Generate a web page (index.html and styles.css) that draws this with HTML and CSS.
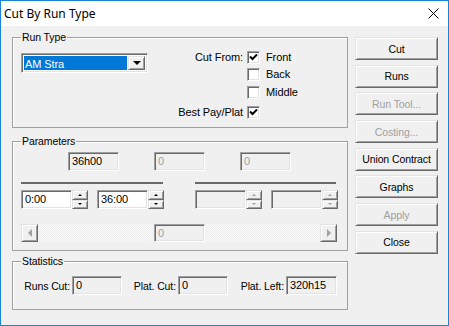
FILE: index.html
```html
<!DOCTYPE html>
<html lang="en">

<head>
	<meta charset="utf-8" />
	<title>Cut By Run Type</title>
	<link rel="stylesheet" href="styles.css">
</head>

<body>
	<div class="window">
		<div class="titlebar">
			<span class="title">Cut By Run Type</span>
			<svg class="close" width="11" height="11" viewBox="0 0 11 11"><path d="M0.5 0.5L10.5 10.5M10.5 0.5L0.5 10.5" stroke="#000" stroke-width="1" fill="none"/></svg>
		</div>
		<div class="client">
			<div class="main">
				<div class="group group-runtype">
					<span class="group-title">Run Type</span>
					<div class="combo">
						<span class="combo-value"><span class="combo-sel">AM Stra</span></span>
						<span class="combo-btn"><span class="tri tri-down"></span></span>
					</div>
					<div class="cut-from">
						<span class="cf-label">Cut From:</span>
						<span class="check checked"><svg width="9" height="9" viewBox="0 0 9 9"><path d="M1 3.5L3.5 6L8 1.5" stroke="#000" stroke-width="2" fill="none"/></svg></span>
						<span class="check-text">Front</span>

						<span class="cf-label"></span>
						<span class="check"></span>
						<span class="check-text">Back</span>

						<span class="cf-label"></span>
						<span class="check"></span>
						<span class="check-text">Middle</span>

						<span class="cf-label">Best Pay/Plat</span>
						<span class="check checked"><svg width="9" height="9" viewBox="0 0 9 9"><path d="M1 3.5L3.5 6L8 1.5" stroke="#000" stroke-width="2" fill="none"/></svg></span>
						<span class="check-text"></span>
					</div>
				</div>

				<div class="group group-params">
					<span class="group-title">Parameters</span>
					<div class="param-fields">
						<span class="field readonly">36h00</span>
						<span class="field disabled">0</span>
						<span class="field disabled">0</span>
					</div>
					<div class="spin-cols">
						<div class="spin-col">
							<div class="sep"></div>
							<div class="spin-row">
								<div class="spin-edit">
									<span class="field edit">0:00</span>
									<span class="spin"><span class="spin-up"><span class="tri tri-up"></span></span><span class="spin-down"><span class="tri tri-down-s"></span></span></span>
								</div>
								<div class="spin-edit">
									<span class="field edit">36:00</span>
									<span class="spin"><span class="spin-up"><span class="tri tri-up"></span></span><span class="spin-down"><span class="tri tri-down-s"></span></span></span>
								</div>
							</div>
						</div>
						<div class="spin-col spin-col-right">
							<div class="sep sep-right"></div>
							<div class="spin-row">
								<div class="spin-edit off">
									<span class="field disabled"></span>
									<span class="spin"><span class="spin-up"><span class="tri tri-up"></span></span><span class="spin-down"><span class="tri tri-down-s"></span></span></span>
								</div>
								<div class="spin-edit off">
									<span class="field disabled"></span>
									<span class="spin"><span class="spin-up"><span class="tri tri-up"></span></span><span class="spin-down"><span class="tri tri-down-s"></span></span></span>
								</div>
							</div>
						</div>
					</div>
					<div class="scrollbar">
						<span class="sb-btn"><span class="tri tri-left"></span></span>
						<span class="sb-track"></span>
						<span class="sb-btn"><span class="tri tri-right"></span></span>
						<span class="field disabled sb-field">0</span>
					</div>
				</div>

				<div class="group group-stats">
					<span class="group-title">Statistics</span>
					<div class="stats">
						<span class="stat-label">Runs Cut:</span>
						<span class="field readonly">0</span>
						<span class="stat-label">Plat. Cut:</span>
						<span class="field readonly">0</span>
						<span class="stat-label">Plat. Left:</span>
						<span class="field readonly">320h15</span>
					</div>
				</div>
			</div>

			<div class="buttons">
				<button type="button">Cut</button>
				<button type="button">Runs</button>
				<button type="button" disabled>Run Tool...</button>
				<button type="button" disabled>Costing...</button>
				<button type="button">Union Contract</button>
				<button type="button">Graphs</button>
				<button type="button" disabled>Apply</button>
				<button type="button">Close</button>
			</div>
		</div>
	</div>
</body>

</html>
```

FILE: styles.css
```css
body {
	margin: 0;
	background-color: #f0f0f0;
	font-family: "Liberation Sans", Arial, sans-serif;
	font-size: 10.5px;
	letter-spacing: -0.1px;
	color: #000000;
}
.window {
	width: 449px;
	height: 326px;
	box-sizing: border-box;
	border: solid 1px #1883d7;
	background-color: #f0f0f0;
}
.titlebar {
	height: 25px;
	background-color: #ffffff;
	display: flex;
	align-items: center;
	justify-content: space-between;
	padding: 0 9px 0 3px;
}
.title {
	font-family: "Noto Sans", "Liberation Sans", sans-serif;
	font-size: 12px;
	letter-spacing: 0;
	line-height: 14px;
}
.close {
	display: block;
}
.client {
	display: flex;
	gap: 7px;
	padding: 11px 0 0 11px;
}
.main {
	width: 336px;
}

/* group boxes */
.group {
	position: relative;
	box-sizing: border-box;
	border: solid 1px #a0a0a0;
	box-shadow: inset 1px 1px #ffffff;
}
.group-title {
	position: absolute;
	top: -7px;
	left: 8px;
	padding: 0 1px;
	line-height: 13px;
	background-color: #f0f0f0;
}
.group-runtype {
	height: 91px;
	display: flex;
	align-items: flex-start;
	padding: 13px 0 0 8px;
}
.group-params {
	height: 110px;
	margin-top: 13px;
	padding: 10px 0 0 8px;
}
.group-stats {
	height: 49px;
	margin-top: 10px;
	padding-top: 14px;
}

/* 3d borders */
.field,
.check,
.combo {
	box-sizing: border-box;
	border: solid 1px;
	border-color: #a0a0a0 #ffffff #ffffff #a0a0a0;
	box-shadow: inset 1px 1px #696969, inset -1px -1px #e3e3e3;
}
.combo-btn,
.spin-up,
.spin-down,
.sb-btn,
button {
	box-sizing: border-box;
	border: solid 1px;
	border-color: #e3e3e3 #696969 #696969 #e3e3e3;
	box-shadow: inset 1px 1px #ffffff, inset -1px -1px #a0a0a0;
	background-color: #f0f0f0;
}

/* combo */
.combo {
	width: 127px;
	height: 20px;
	margin-top: 2px;
	display: flex;
	padding: 2px;
	background-color: #ffffff;
}
.combo-value {
	flex: 1;
	padding: 0 1px 0 0;
}
.combo-sel {
	display: block;
	height: 100%;
	background-color: #0078d7;
	color: #ffffff;
	font-size: 11px;
	line-height: 16px;
	padding-left: 1px;
}
.combo-btn {
	width: 17px;
	display: flex;
	align-items: center;
	justify-content: center;
}

/* triangles */
.tri {
	display: block;
	width: 0;
	height: 0;
	border-style: solid;
	border-color: transparent;
}
.tri-down {
	border-width: 4px 4px 0 4px;
	border-top-color: #000000;
}
.tri-up {
	border-width: 0 2px 2px 2px;
	border-bottom-color: #000000;
}
.tri-down-s {
	border-width: 2px 2px 0 2px;
	border-top-color: #000000;
}
.tri-left {
	border-width: 4px 4px 4px 0;
	border-right-color: #a0a0a0;
}
.tri-right {
	border-width: 4px 0 4px 4px;
	border-left-color: #a0a0a0;
}
.off .tri-up {
	border-bottom-color: #a0a0a0;
}
.off .tri-down-s {
	border-top-color: #a0a0a0;
}

/* cut from */
.cut-from {
	display: grid;
	grid-template-columns: 70px 13px auto;
	grid-template-rows: 17px 18px 20px 13px;
	align-items: start;
	margin-left: 29px;
	line-height: 13px;
	font-size: 11px;
}
.cf-label {
	text-align: right;
	padding-right: 4px;
	white-space: nowrap;
}
.check {
	width: 13px;
	height: 13px;
	background-color: #ffffff;
	display: flex;
	align-items: center;
	justify-content: center;
}
.check svg {
	display: block;
}
.check-text {
	padding-left: 6px;
}

/* fields */
.field {
	display: block;
	width: 51px;
	height: 19px;
	line-height: 17px;
	padding-left: 3px;
	background-color: #f0f0f0;
	white-space: nowrap;
	overflow: hidden;
	font-size: 11px;
}
.field.edit {
	background-color: #ffffff;
}
.field.disabled {
	color: #a0a0a0;
}
.param-fields {
	display: flex;
	gap: 35px;
	padding-left: 47px;
}

/* spin edits */
.spin-cols {
	display: flex;
	gap: 31px;
	margin-top: 11px;
}
.spin-col {
	width: 143px;
}
.spin-col-right {
	width: 144px;
}
.sep {
	height: 2px;
	width: 142px;
	background-color: #696969;
}
.sep-right {
	width: 141px;
}
.spin-row {
	display: flex;
	gap: 9px;
	margin-top: 6px;
}
.spin-edit {
	display: flex;
}
.spin {
	display: flex;
	flex-direction: column;
	width: 16px;
	height: 19px;
}
.spin-up,
.spin-down {
	flex: 1;
	display: flex;
	align-items: center;
	justify-content: center;
}

/* scrollbar */
.scrollbar {
	position: relative;
	display: flex;
	width: 316px;
	height: 18px;
	margin-top: 15px;
}
.sb-btn {
	width: 17px;
	display: flex;
	align-items: center;
	justify-content: center;
}
.sb-track {
	flex: 1;
	background: repeating-conic-gradient(#ffffff 0 25%, #e8e8e8 0 50%) 0 0 / 2px 2px;
}
.sb-field {
	position: absolute;
	left: 133px;
	top: 0;
	height: 18px;
}

/* statistics */
.stats {
	display: grid;
	grid-template-columns: 59px 50px 56px 50px 58px 51px;
	align-items: center;
}
.stat-label {
	text-align: right;
	padding-right: 2px;
	white-space: nowrap;
}
.stats .field {
	width: auto;
}

/* buttons */
.buttons {
	display: flex;
	flex-direction: column;
	gap: 4.7px;
	width: 83px;
}
button {
	height: 23px;
	padding: 0;
	font-family: "Liberation Sans", Arial, sans-serif;
	font-size: 10.5px;
	letter-spacing: -0.1px;
	color: #000000;
}
button:disabled {
	color: #a0a0a0;
}
```
